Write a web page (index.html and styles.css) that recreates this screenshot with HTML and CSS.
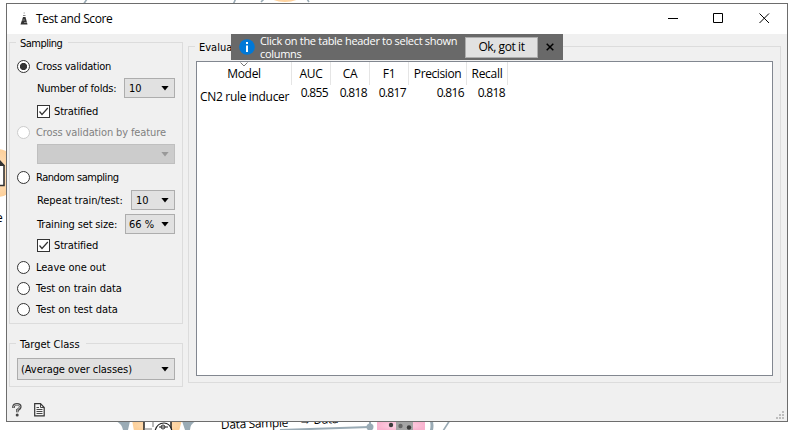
FILE: index.html
```
<!DOCTYPE html>
<html lang="en">
<head>
<meta charset="utf-8">
<title>Test and Score</title>
<link rel="stylesheet" href="styles.css">
</head>
<body>
<svg class="canvas" width="793" height="430" viewBox="0 0 793 430">
  <defs>
    <radialGradient id="orange"><stop offset="0" stop-color="#ffe6c8"/><stop offset="1" stop-color="#fdd09a"/></radialGradient>
    <radialGradient id="pink"><stop offset="0" stop-color="#ffdfeb"/><stop offset="1" stop-color="#f9b3cf"/></radialGradient>
  </defs>
  <g fill="none" stroke="#9aabb5" stroke-width="1.6">
    <path d="M87 -1 L83 5M236 -2 L233 5M264 -1 L261 2M307 -1 L309 2"/>
    <path d="M280 430 L370 427" stroke-width="2"/>
    <path d="M431 420 q2 5 0 12" stroke-width="3"/>
    <path d="M450 420 L443 431"/>
  </g>
  <ellipse cx="285" cy="-7" rx="18" ry="9" fill="url(#orange)"/>
  <circle cx="-4" cy="173" r="24" fill="url(#orange)"/>
  <path d="M-6 160 H-1 L4 165.500 V185.500 H-6Z" fill="#fff" stroke="#333" stroke-width="1.600"/>
  <path d="M-1 160 L5 166 H-1Z" fill="#333"/>
  <g fill="#9aabb5">
    <path d="M116 421 H130 L128 430 H123Q122 424 116 421M196 421 H182 L185 430 H190Q190 424 196 421"/>
    <circle cx="370" cy="427" r="3.500"/><path d="M369 421h2v5h-2z"/>
  </g>
  <path d="M132 420 H182 L179 431 H134Z" fill="url(#orange)"/>
  <path d="M144 418 V431 H171 V418" fill="#fff" stroke="#222" stroke-width="1.500"/>
  <path d="M144 429 H152M153 418 V427" stroke="#777" fill="none"/>
  <path d="M155 431 q2 -8 9 -8 q6 0 8 8M159 427h9" fill="#fff" stroke="#222" stroke-width="1.200"/>
  <circle cx="163" cy="427" r="2" fill="none" stroke="#333"/>
  <rect x="377" y="420" width="48" height="11" fill="url(#pink)"/>
  <rect x="396" y="420" width="17" height="11" fill="#a5a5a5"/>
  <g fill="#3c3c3c"><circle cx="391" cy="425" r="2.200"/><circle cx="400.500" cy="426" r="2.200" fill="#666"/><circle cx="409" cy="427.500" r="2.200"/></g>
  <g class="link-label"><text x="221" y="429" transform="rotate(-2 221 428)">Data Sample</text><text x="299" y="424.500" transform="rotate(-2 299 425)">→ Data</text><text x="-4" y="222">e</text></g>
</svg>

<main class="window">
  <header class="titlebar">
    <svg class="app-icon" width="10" height="14" viewBox="0 0 10 14"><path d="M4 5 H6.500 L8.500 12.500 H1.500Z" fill="#333"/><path d="M4 3.500 h2.500M3 8h3M5 10.500h3" stroke="#888"/><path d="M4.500 1h1.500" stroke="#aaa"/></svg>
    <h1>Test and Score</h1>
    <svg class="controls" width="102" height="12" viewBox="0 0 102 12" fill="none" stroke="#000"><path d="M0 5.500 H10M45.500 .5 h9 v9 h-9zM91.500 .5 L101 10M101 .5 L91.500 10"/></svg>
  </header>
  <div class="content">
    <aside>
      <section class="group sampling">
        <h2><span class="t-sampling">Sampling</span></h2>
        <div class="row r20"><i class="radio on"></i><span class="t-cv">Cross validation</span></div>
        <div class="row r24 sub"><span class="t-num">Number of folds:</span><div class="combo w51"><span>10</span><b></b></div></div>
        <div class="row r22 sub"><i class="check"><svg width="11" height="11" viewBox="0 0 11 11"><path d="M1.500 5.500 L4 8.500 L9.800 2"/></svg></i><span class="t-strat">Stratified</span></div>
        <div class="row r20 off"><i class="radio"></i><span class="t-feature">Cross validation by feature</span></div>
        <div class="row r24 sub"><div class="combo w138 disabled"><b></b></div></div>
        <div class="row r22"><i class="radio"></i><span class="t-random">Random sampling</span></div>
        <div class="row r24 sub"><span class="t-repeat">Repeat train/test:</span><div class="combo w44"><span>10</span><b></b></div></div>
        <div class="row r24 sub"><span class="t-training">Training set size:</span><div class="combo w50 tight"><span>66 %</span><b></b></div></div>
        <div class="row r18 sub"><i class="check"><svg width="11" height="11" viewBox="0 0 11 11"><path d="M1.500 5.500 L4 8.500 L9.800 2"/></svg></i><span class="t-strat">Stratified</span></div>
        <div class="row r26"><i class="radio"></i><span>Leave one out</span></div>
        <div class="row r16"><i class="radio"></i><span>Test on train data</span></div>
        <div class="row r26"><i class="radio"></i><span>Test on test data</span></div>
      </section>
      <section class="group target">
        <h2><span>Target Class</span></h2>
        <div class="combo wide"><span class="t-avg">(Average over classes)</span><b></b></div>
      </section>
      <div class="tools">
        <svg width="10" height="14" viewBox="0 0 10 14" fill="none"><path d="M1.500 5 V3.500 Q2 1.300 5 1.300 Q8.300 1.300 8.300 3.700 Q8.300 5.500 5.300 7.200 V9.300" stroke="#444" stroke-width="2.600"/><path d="M1.500 4.500 V3.500 Q2 1.500 5 1.500 Q8 1.500 8 3.700 Q8 5.300 5.200 7 V9" stroke="#ddd" stroke-width=".8"/><circle cx="5.200" cy="12" r="1.500" fill="#444"/></svg>
        <svg width="11" height="14" viewBox="0 0 11 14" fill="none" stroke="#333"><path d="M.7 .7 H6.500 L10.200 4.500 V12.800 H.7Z" stroke-width="1.200" fill="#f5f5f5"/><path d="M6.500 1 V4.500 H10M2.500 4.500H5M2.500 6.500H8.500M2.500 8.500H8.500M2.500 10.500H8.500" stroke-width=".9"/></svg>
      </div>
    </aside>
    <section class="group results">
      <h2><span>Evalua</span></h2>
      <div class="grid-box">
        <table>
          <colgroup><col class="c-model"><col class="c-num"><col class="c-num"><col class="c-num"><col class="c-prec"><col class="c-rec"></colgroup>
          <thead><tr><th><svg class="sort" width="8" height="5" viewBox="0 0 8 5"><path d="M.5 .5 L4 4 L7.500 .5"/></svg>Model</th><th>AUC</th><th>CA</th><th>F1</th><th class="t-prec">Precision</th><th>Recall</th></tr></thead>
          <tbody><tr><td>CN2 rule inducer</td><td>0.855</td><td>0.818</td><td>0.817</td><td>0.816</td><td>0.818</td></tr></tbody>
        </table>
      </div>
    </section>
  </div>
  <div class="tip">
    <svg width="16" height="16" viewBox="0 0 16 16"><circle cx="8" cy="8" r="7.800" fill="#0078d7"/><path d="M7 3h2v2H7zM7 6.500h2V13H7z" fill="#fff"/></svg>
    <p>Click on the table header to select shown columns</p>
    <button>Ok, got it</button>
    <svg class="tip-x" width="8" height="8" viewBox="0 0 8 8"><path d="M.7 .7 L7.300 7.300M7.300 .7 L.7 7.300" stroke="#000" stroke-width="1.500"/></svg>
  </div>
  <svg class="grip" width="8" height="8" viewBox="0 0 8 8" fill="#bdbdbd"><path d="M6 0h2v2H6zM3 3h2v2H3zM6 3h2v2H6zM0 6h2v2H0zM3 6h2v2H3zM6 6h2v2H6z"/></svg>
</main>
</body>
</html>
```
FILE: styles.css
```
* { box-sizing: border-box; }
body { margin: 0; width: 793px; height: 430px; overflow: hidden; background: #fff; color: #000; font: 11px/14px "DejaVu Sans Condensed", "DejaVu Sans", sans-serif; }
h1, h2, p { margin: 0; font-weight: normal; font-size: inherit; }
svg { display: block; flex: none; }
.canvas { position: absolute; left: 0; top: 0; }
.link-label { font: 12px "Open Sans", sans-serif; letter-spacing: -.35px; }

.window { position: relative; margin: 3px 0 0 6px; width: 782px; height: 419px; border: 1px solid #6d6d6d; background: #f0f0f0; }
.titlebar { display: flex; align-items: center; height: 30px; padding: 0 19px 0 12px; background: #fff; font: 12px/16px "Open Sans", sans-serif; }
.titlebar h1 { margin-left: 7px; letter-spacing: -.42px; }
.controls { margin-left: auto; margin-right: -2px; }
.content { display: flex; gap: 5px; padding: 8px 6px 0 2px; }
aside { width: 174px; }

.group { position: relative; border: 1px solid #dcdcdc; }
.group h2 { position: absolute; left: 6px; top: -6px; padding: 0 6px 0 4px; background: #f0f0f0; white-space: nowrap; }
.sampling { height: 282px; padding: 13px 7px 0; }
.target { margin-top: 19px; height: 44px; padding: 14px 7px 0; }
.row { display: flex; align-items: center; gap: 6px; white-space: nowrap; letter-spacing: -.03px; }
.row span, .combo span { padding-top: 2px; }
.sub { padding-left: 20px; }
.sub .combo { margin-left: auto; }
.off { color: #808080; }
.r16 { height: 16px; } .r18 { height: 18px; } .r20 { height: 20px; } .r22 { height: 22px; } .r24 { height: 24px; } .r26 { height: 26px; }

.radio { width: 13px; height: 13px; border: 1px solid #333; border-radius: 50%; background: #fff; flex: none; }
.radio.on { background: radial-gradient(circle, #333 3.2px, #fff 4px); }
.off .radio { border-color: #ccc; }
.check { width: 13px; height: 13px; border: 1px solid #333; background: #fff; flex: none; }
.check svg { fill: none; stroke: #333; stroke-width: 1.2; }
.check + span { margin-left: -2px; }

.combo { display: flex; align-items: center; height: 20px; padding: 0 5px 0 4px; border: 1px solid #adadad; background: #e1e1e1; white-space: nowrap; }
.combo b { margin-left: auto; width: 8px; height: 5px; background: #000; clip-path: polygon(0 0, 100% 0, 50% 100%); }
.combo.disabled { background: #ccc; border-color: #bfbfbf; }
.combo.disabled b { background: #999; }
.combo.tight { padding-left: 3px; }
.combo.wide { height: 22px; padding-left: 3px; }
.w44 { width: 44px; } .w50 { width: 50px; } .w51 { width: 51px; } .w138 { width: 138px; }
.tools { display: flex; align-items: center; gap: 12px; padding: 16px 0 0 3px; }

.results { margin-top: 4px; width: 593px; height: 337px; padding: 14px 7px 0; }
.grid-box { height: 315px; border: 1px solid #828790; background: #fff; }
table { table-layout: fixed; width: 311px; border-collapse: collapse; font: 12px/16px "Open Sans", sans-serif; letter-spacing: -.3px; }
.c-model { width: 95px; } .c-num { width: 39px; } .c-prec { width: 58px; } .c-rec { width: 41px; }
th, td { padding: 0; white-space: nowrap; font-weight: normal; }
th { position: relative; height: 23px; padding-right: 1px; text-align: center; box-shadow: inset -1px 0 #e5e5e5; }
td { height: 16px; padding-right: 3px; text-align: right; letter-spacing: -.65px; vertical-align: top; }
td:first-child { padding: 4px 0 0 3px; text-align: left; letter-spacing: -.32px; }
.sort { position: absolute; left: 43px; top: 0; fill: none; stroke: #777; }

.tip { position: absolute; left: 224px; top: 30px; width: 332px; height: 26px; display: flex; align-items: center; padding-left: 8px; background: #696969; }
.tip p { margin-left: 5px; width: 205px; color: #fff; font: 11px/13px "Open Sans", sans-serif; letter-spacing: -.31px; }
.tip button { width: 73px; height: 21px; padding: 0; border: 1px solid #adadad; background: #e1e1e1; color: #000; font: 12px/16px "Open Sans", sans-serif; letter-spacing: -.42px; }
.tip-x { margin-left: 8px; }
.grip { position: absolute; right: 3px; bottom: 2px; }

.t-sampling { letter-spacing: -.5px; }
.t-cv { letter-spacing: -.25px; }
.t-num { letter-spacing: -.2px; }
.t-strat { letter-spacing: -.15px; }
.t-feature { letter-spacing: -.12px; }
.t-random { letter-spacing: -.45px; }
.t-repeat { letter-spacing: -.05px; }
.t-training { letter-spacing: -.15px; }
.t-avg { letter-spacing: -.07px; }
.t-prec { letter-spacing: -.4px; }
```
